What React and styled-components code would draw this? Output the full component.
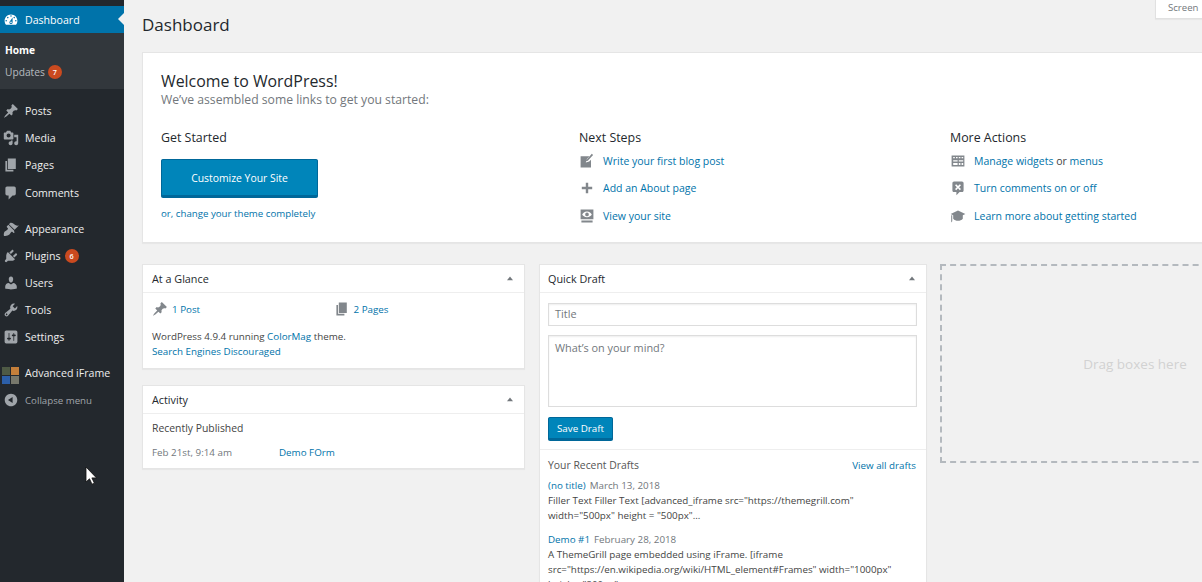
import React from "react";
import styled, { createGlobalStyle } from "styled-components";

const GlobalStyle = createGlobalStyle`
  html, body {
    margin: 0;
    height: 100%;
    overflow: hidden;
    background: #f1f1f1;
  }

  body {
    font-family: "Open Sans", "Noto Sans", sans-serif;
    font-size: 9.8px;
    color: #444;
  }

  * {
    box-sizing: border-box;
  }
`;

const ICONS = {
  dashboard:
    "M3.76 16h12.48c1.1-1.37 1.76-3.11 1.76-5 0-4.42-3.58-8-8-8s-8 3.58-8 8c0 1.89.66 3.63 1.76 5zM10 4c.55 0 1 .45 1 1s-.45 1-1 1-1-.45-1-1 .45-1 1-1zM6 6c.55 0 1 .45 1 1s-.45 1-1 1-1-.45-1-1 .45-1 1-1zm8 0c.55 0 1 .45 1 1s-.45 1-1 1-1-.45-1-1 .45-1 1-1zm-5.37 5.55L12 7v6c0 1.1-.9 2-2 2s-2-.9-2-2c0-.57.24-1.08.63-1.45zM4 10c.55 0 1 .45 1 1s-.45 1-1 1-1-.45-1-1 .45-1 1-1zm12 0c.55 0 1 .45 1 1s-.45 1-1 1-1-.45-1-1 .45-1 1-1zm-5 3c0-.55-.45-1-1-1s-1 .45-1 1 .45 1 1 1 1-.45 1-1z",
  post:
    "M10.44 3.02l1.82-1.82 6.36 6.35-1.83 1.82c-1.05-.68-2.48-.57-3.41.36l-.75.75c-.92.93-1.04 2.35-.35 3.41l-1.83 1.82-2.41-2.41-2.8 2.79c-.42.42-3.38 2.71-3.8 2.29s1.86-3.39 2.28-3.81l2.79-2.79L4.1 9.36l1.83-1.82c1.05.69 2.48.57 3.4-.36l.75-.75c.93-.92 1.05-2.35.36-3.41z",
  media:
    "M13 11V4c0-.55-.45-1-1-1h-1.67L9 1H5L3.67 3H2c-.55 0-1 .45-1 1v7c0 .55.45 1 1 1h10c.55 0 1-.45 1-1zM7 4.5c1.38 0 2.5 1.12 2.5 2.5S8.38 9.5 7 9.5 4.5 8.38 4.5 7 5.62 4.5 7 4.5zM14 6h5v10.5c0 1.38-1.12 2.5-2.5 2.5S14 17.88 14 16.5s1.12-2.5 2.5-2.5c.17 0 .34.02.5.05V9h-3V6zm-4 8.05V13h2v3.5c0 1.38-1.12 2.5-2.5 2.5S7 17.88 7 16.5 8.12 14 9.5 14c.17 0 .34.02.5.05z",
  page: "M6 15V2h10v13H6zm-1 1h8v2H3V5h2v11z",
  comment:
    "M5 2h9c1.1 0 2 .9 2 2v7c0 1.1-.9 2-2 2h-2l-5 5v-5H5c-1.1 0-2-.9-2-2V4c0-1.1.9-2 2-2z",
  appearance:
    "M14.48 11.06L7.41 3.99l1.5-1.5c.5-.56 2.3-.47 3.51.32 1.21.8 1.43 1.28 2.91 2.1 1.18.64 2.45 1.26 4.45.85zm-.71.71L6.7 4.7 4.93 6.47c-.39.39-.39 1.02 0 1.41l1.06 1.06c.39.39.39 1.03 0 1.42-.6.6-1.43 1.11-2.21 1.69-.35.26-.7.53-1.01.84C1.43 13.23.5 16.5 1.2 18.6c2.1.7 5.4-.2 6.7-1.6.31-.31.58-.66.84-1.01.58-.78 1.09-1.61 1.69-2.21.39-.39 1.03-.39 1.42 0l1.06 1.06c.39.39 1.02.39 1.41 0z",
  plugin:
    "M13.11 4.36L9.87 7.6 8 5.73l3.24-3.24c.35-.34 1.05-.2 1.56.32.52.51.66 1.21.31 1.55zm-8 1.77l.91-1.12 9.01 9.01-1.19.84c-.71.71-2.63 1.16-3.82 1.16H6.14L4.9 17.26c-.59.59-1.54.59-2.12 0-.59-.58-.59-1.53 0-2.12l1.24-1.24v-3.88c0-1.13.4-3.19 1.09-3.89zm7.26 3.97l3.24-3.24c.34-.35 1.04-.21 1.55.31.52.51.66 1.21.31 1.55l-3.24 3.25z",
  users:
    "M10 9.25c-2.27 0-2.73-3.44-2.73-3.44C7 4.02 7.82 2 9.97 2c2.16 0 2.98 2.02 2.71 3.81 0 0-.41 3.44-2.68 3.44zm0 2.57L12.72 10c2.39 0 4.52 2.33 4.52 4.53v2.49s-3.65 1.13-7.24 1.13c-3.65 0-7.24-1.13-7.24-1.13v-2.49c0-2.25 1.94-4.48 4.47-4.48z",
  tools:
    "M16.68 9.77c-1.34 1.34-3.3 1.67-4.95.99l-5.41 6.52c-.99.99-2.59.99-3.58 0s-.99-2.59 0-3.57l6.52-5.42c-.68-1.65-.35-3.61.99-4.95 1.28-1.28 3.12-1.62 4.72-1.06l-2.89 2.89 2.82 2.82 2.86-2.87c.53 1.58.18 3.39-1.08 4.65zM3.81 16.21c.4.39 1.04.39 1.43 0 .4-.4.4-1.04 0-1.43-.39-.4-1.03-.4-1.43 0-.39.39-.39 1.03 0 1.43z",
  settings:
    "M18 16V4c0-1.1-.9-2-2-2H4c-1.1 0-2 .9-2 2v12c0 1.1.9 2 2 2h12c1.1 0 2-.9 2-2zM8 11h1c.55 0 1 .45 1 1s-.45 1-1 1H8v1.5c0 .28-.22.5-.5.5s-.5-.22-.5-.5V13H6c-.55 0-1-.45-1-1s.45-1 1-1h1V5.5c0-.28.22-.5.5-.5s.5.22.5.5V11zm5-2h-1c-.55 0-1-.45-1-1s.45-1 1-1h1V5.5c0-.28.22-.5.5-.5s.5.22.5.5V7h1c.55 0 1 .45 1 1s-.45 1-1 1h-1v5.5c0 .28-.22.5-.5.5s-.5-.22-.5-.5V9z",
  collapse:
    "M10 2.16c4.33 0 7.84 3.51 7.84 7.84s-3.51 7.84-7.84 7.84S2.16 14.33 2.16 10 5.71 2.16 10 2.16zm2 11.72V6.12L6.18 9.97z",
  write:
    "M2 4h11l-3.2 3.6-1.3 4.4 4.3-1.4L15 8.5V18H2zM16 1l1.6 1.4-6.6 7.4-2 .6.6-2z",
  plus: "M8.5 3.5h3v5h5v3h-5v5h-3v-5h-5v-3h5z",
  view:
    "M2 2h16v12H2zM10 4.500C7 4.500 4.800 6.700 4 8c.8 1.300 3 3.500 6 3.500s5.200-2.200 6-3.500c-.8-1.300-3-3.500-6-3.500zm0 1.200a2.300 2.300 0 1 1 0 4.600 2.300 2.300 0 0 1 0-4.600zM3 15.500h14V18H3z",
  widgets:
    "M2 3h16v14H2zM4 5v1.500h2V5zm3.500 0v1.500h2V5zm3.500 0v1.500h2V5zm3.500 0v1.500h2V5zM4 9v1.500h5.500V9zm7 0v1.500h5.500V9zM4 12.500V15h5.500v-2.500zm7 0V15h2v-2.500zm3.500 0V15h2v-2.500z",
  commentOff:
    "M5 2h10c1.100 0 2 .9 2 2v9c0 1.100-.9 2-2 2h-3l-4 4v-4H5c-1.100 0-2-.9-2-2V4c0-1.100.9-2 2-2zM7.700 5.300L6.300 6.700 8.600 9l-2.300 2.300 1.400 1.400L10 10.400l2.300 2.300 1.400-1.400L11.400 9l2.300-2.300-1.400-1.400L10 7.600z",
  learn:
    "M10 3L.8 7.500l3.200 1.600v4.400c1.500 1.700 3.700 2.500 6 2.500s4.500-.8 6-2.500V9.100l3.200-1.600zM1.500 9h1.300v7.500L1.500 18z",
  triangle: "M10 6l5 6H5z",
};

const Svg = styled.svg`
  display: block;
  flex: none;
  width: ${(p) => p.size || 16}px;
  height: ${(p) => p.size || 16}px;
  fill: ${(p) => p.color || "#82878c"};
`;

const Icon = ({ name, size, color }) => (
  <Svg viewBox="0 0 20 20" size={size} color={color}>
    <path d={ICONS[name]} fillRule="evenodd" />
  </Svg>
);

const Page = styled.div`
  display: flex;
  width: 1202px;
  height: 582px;
  overflow: hidden;
  position: relative;
`;

/* left menu */
const Sidebar = styled.nav`
  flex: none;
  width: 124px;
  height: 100%;
  padding-top: 6px;
  background: #23282d;
  color: #eee;
  font-size: 10.6px;
`;

const MenuGroup = styled.div`
  margin-bottom: ${(p) => p.gap || 0}px;
`;

const MenuItem = styled.div`
  position: relative;
  display: flex;
  align-items: center;
  gap: 6px;
  height: ${(p) => p.height || 27.2}px;
  padding-left: 3px;
  white-space: nowrap;
  background: ${(p) => (p.active ? "#0073aa" : "transparent")};
  color: ${(p) => (p.active ? "#fff" : "#eee")};

  ${(p) =>
    p.active &&
    `
    &::after {
      content: "";
      position: absolute;
      right: 0;
      top: 7px;
      border: 6.5px solid transparent;
      border-right-color: #f1f1f1;
      border-left-width: 0;
    }
  `}
`;

const SubMenu = styled.div`
  height: 56px;
  margin-bottom: 8.4px;
  padding: 6px 0 0 5px;
  background: #32373c;
  font-size: 10.2px;
`;

const SubItem = styled.div`
  display: flex;
  align-items: center;
  gap: 3px;
  height: 22px;
  color: ${(p) => (p.current ? "#fff" : "rgba(240,245,250,.7)")};
  font-weight: ${(p) => (p.current ? 700 : 400)};
`;

const Badge = styled.span`
  display: inline-block;
  width: 14px;
  height: 14px;
  margin-left: ${(p) => p.offset || 0}px;
  border-radius: 50%;
  background: #ca4a1f;
  color: #fff;
  font-size: 7.2px;
  font-weight: 600;
  line-height: 14px;
  text-align: center;
`;

const CollapseLabel = styled.span`
  color: #a0a5aa;
  font-size: 9.7px;
`;

const PluginLogo = styled.div`
  display: grid;
  grid-template-columns: 8px 8px;
  grid-template-rows: 8px 8px;
  gap: 1px;
  margin: 5px 0 0 -1px;
  flex: none;
`;

const LogoTile = styled.span`
  background: ${(p) => p.color};
`;

/* content */
const Main = styled.main`
  flex: 1;
  min-width: 0;
  padding-left: 18px;
  overflow: hidden;
`;

const Header = styled.header`
  display: flex;
  justify-content: space-between;
  align-items: flex-start;
  height: 52px;
`;

const Title = styled.h1`
  margin: 14px 0 0;
  font-size: 17px;
  font-weight: 400;
  line-height: 22px;
  color: #23282d;
`;

const ScreenTab = styled.div`
  width: 47px;
  height: 19px;
  padding-left: 12px;
  white-space: nowrap;
  background: #fff;
  border: 1px solid #e1e1e1;
  border-top: 0;
  border-right: 0;
  box-shadow: 0 1px 1px rgba(0, 0, 0, 0.04);
  font-size: 9.6px;
  line-height: 15px;
  color: #72777c;
`;

const WelcomePanel = styled.section`
  width: 1100px;
  height: 191px;
  margin-bottom: 21px;
  padding: 17px 0 0 18px;
  background: #fff;
  border: 1px solid #e5e5e5;
  box-shadow: 0 1px 1px rgba(0, 0, 0, 0.04);
`;

const WelcomeTitle = styled.h2`
  margin: 0;
  font-size: 15.9px;
  font-weight: 400;
  line-height: 22px;
  color: #23282d;
`;

const WelcomeAbout = styled.p`
  margin: 0 0 22px;
  font-size: 12.2px;
  line-height: 15px;
  color: #72777c;
`;

const WelcomeColumns = styled.div`
  display: flex;
`;

const WelcomeColumn = styled.div`
  flex: none;
  width: ${(p) => p.width}px;
`;

const ColumnTitle = styled.h3`
  margin: 0 0 ${(p) => p.gap || 7}px;
  font-size: 12.4px;
  font-weight: 400;
  line-height: 17px;
  color: #23282d;
`;

const PrimaryButton = styled.button`
  display: block;
  width: ${(p) => p.width}px;
  height: ${(p) => p.height}px;
  margin-top: ${(p) => p.top || 0}px;
  padding: 0;
  background: #0085ba;
  border: 1px solid #006799;
  border-bottom-width: 2px;
  border-radius: 2px;
  color: #fff;
  font-family: inherit;
  font-size: ${(p) => p.fontSize}px;
  box-shadow: 0 1px 0 #006799;
`;

const Link = styled.a`
  color: #0073aa;
  text-decoration: none;
`;

const SmallNote = styled.p`
  margin: 9px 0 0;
  font-size: 9.7px;
  line-height: 15px;
`;

const StepList = styled.div`
  display: flex;
  flex-direction: column;
  gap: 11.3px;
  font-size: 10.5px;
`;

const Step = styled.div`
  display: flex;
  align-items: center;
  gap: 8px;
  height: 16px;
`;

const Columns = styled.div`
  display: flex;
  align-items: flex-start;
`;

const BoxColumn = styled.div`
  flex: none;
  display: flex;
  flex-direction: column;
  gap: 16px;
  width: ${(p) => p.width}px;
  margin-right: ${(p) => p.gap || 0}px;
`;

const Postbox = styled.section`
  background: #fff;
  border: 1px solid #e5e5e5;
  box-shadow: 0 1px 1px rgba(0, 0, 0, 0.04);
`;

const BoxHeader = styled.div`
  display: flex;
  justify-content: space-between;
  align-items: center;
  height: 28px;
  padding: 0 8px 0 ${(p) => p.inset || 9}px;
  border-bottom: 1px solid #eee;
  font-size: 10.8px;
  color: #23282d;
`;

const BoxBody = styled.div`
  padding: ${(p) => p.pad || "0 9px"};
  height: ${(p) => (p.height ? `${p.height}px` : "auto")};
`;

const GlanceRow = styled.div`
  display: flex;
  height: 36px;
  padding-top: 8px;
`;

const GlanceItem = styled.div`
  display: flex;
  align-items: center;
  gap: 4px;
  width: 183px;
  height: 16px;
`;

const Line = styled.p`
  margin: 0;
  line-height: 15px;
  white-space: nowrap;
`;

const ActivityTitle = styled.p`
  margin: 0 0 11px;
  font-size: 10.4px;
  line-height: 14px;
`;

const ActivityRow = styled.div`
  display: flex;
  line-height: 14px;
`;

const ActivityDate = styled.span`
  width: 127px;
  color: #72777c;
`;

const DraftForm = styled.div`
  display: flex;
  flex-direction: column;
  align-items: flex-start;
  gap: 9px;
  padding: 10px 8px 9px;
  border-bottom: 1px solid #eee;
`;

const Field = styled.div`
  width: 369px;
  height: ${(p) => p.height}px;
  padding: ${(p) => p.top}px 6px 0;
  background: #fff;
  border: 1px solid #ddd;
  box-shadow: inset 0 1px 2px rgba(0, 0, 0, 0.07);
  color: #72777c;
  font-size: 10.9px;
  line-height: 13px;
`;

const DraftsHead = styled.div`
  display: flex;
  justify-content: space-between;
  align-items: center;
  height: 14px;
  margin: 8px 2px 6px 0;
`;

const DraftsTitle = styled.span`
  font-size: 10.4px;
  color: #555;
`;

const Draft = styled.div`
  margin-bottom: 9px;
`;

const Muted = styled.span`
  margin-left: 4px;
  color: #72777c;
`;

const DropZone = styled.div`
  display: flex;
  align-items: center;
  justify-content: center;
  height: 199px;
  border: 2px dashed #b4b9be;
  color: #d2d2d2;
  font-size: 13.5px;
`;

const Cursor = styled.svg`
  position: absolute;
  left: 85px;
  top: 466px;
  width: 12px;
  height: 19px;
`;

const Collapse = () => <Icon name="triangle" size={12} color="#72777c" />;

export default function App() {
  return (
    <Page>
      <GlobalStyle />
      <Sidebar>
        <MenuItem active height={27}>
          <Icon name="dashboard" size={16} color="#fff" />
          Dashboard
        </MenuItem>
        <SubMenu>
          <SubItem current>Home</SubItem>
          <SubItem>
            Updates <Badge>7</Badge>
          </SubItem>
        </SubMenu>
        <MenuGroup gap={9}>
          <MenuItem><Icon name="post" color="#a0a5aa" />Posts</MenuItem>
          <MenuItem><Icon name="media" color="#a0a5aa" />Media</MenuItem>
          <MenuItem><Icon name="page" color="#a0a5aa" />Pages</MenuItem>
          <MenuItem><Icon name="comment" color="#a0a5aa" />Comments</MenuItem>
        </MenuGroup>
        <MenuGroup gap={8.6}>
          <MenuItem><Icon name="appearance" color="#a0a5aa" />Appearance</MenuItem>
          <MenuItem><Icon name="plugin" color="#a0a5aa" />Plugins <Badge offset={-2}>6</Badge></MenuItem>
          <MenuItem><Icon name="users" color="#a0a5aa" />Users</MenuItem>
          <MenuItem><Icon name="tools" color="#a0a5aa" />Tools</MenuItem>
          <MenuItem><Icon name="settings" color="#a0a5aa" />Settings</MenuItem>
        </MenuGroup>
        <MenuItem>
          <PluginLogo>
            <LogoTile color="#4e5a45" />
            <LogoTile color="#c47f3a" />
            <LogoTile color="#2c5fa8" />
            <LogoTile color="#77786c" />
          </PluginLogo>
          Advanced iFrame
        </MenuItem>
        <MenuItem>
          <Icon name="collapse" color="#a0a5aa" />
          <CollapseLabel>Collapse menu</CollapseLabel>
        </MenuItem>
      </Sidebar>

      <Main>
        <Header>
          <Title>Dashboard</Title>
          <ScreenTab>Screen</ScreenTab>
        </Header>

        <WelcomePanel>
          <WelcomeTitle>Welcome to WordPress!</WelcomeTitle>
          <WelcomeAbout>We’ve assembled some links to get you started:</WelcomeAbout>
          <WelcomeColumns>
            <WelcomeColumn width={418}>
              <ColumnTitle gap={13}>Get Started</ColumnTitle>
              <PrimaryButton width={157} height={38} fontSize={10.4}>Customize Your Site</PrimaryButton>
              <SmallNote>
                <Link>or, change your theme completely</Link>
              </SmallNote>
            </WelcomeColumn>
            <WelcomeColumn width={371}>
              <ColumnTitle>Next Steps</ColumnTitle>
              <StepList>
                <Step><Icon name="write" /><Link>Write your first blog post</Link></Step>
                <Step><Icon name="plus" /><Link>Add an About page</Link></Step>
                <Step><Icon name="view" /><Link>View your site</Link></Step>
              </StepList>
            </WelcomeColumn>
            <WelcomeColumn width={280}>
              <ColumnTitle>More Actions</ColumnTitle>
              <StepList>
                <Step><Icon name="widgets" /><span><Link>Manage widgets</Link> or <Link>menus</Link></span></Step>
                <Step><Icon name="commentOff" /><Link>Turn comments on or off</Link></Step>
                <Step><Icon name="learn" /><Link>Learn more about getting started</Link></Step>
              </StepList>
            </WelcomeColumn>
          </WelcomeColumns>
        </WelcomePanel>

        <Columns>
          <BoxColumn width={383} gap={14}>
            <Postbox>
              <BoxHeader>At a Glance <Collapse /></BoxHeader>
              <BoxBody height={75}>
                <GlanceRow>
                  <GlanceItem><Icon name="post" /><Link>1 Post</Link></GlanceItem>
                  <GlanceItem><Icon name="page" /><Link>2 Pages</Link></GlanceItem>
                </GlanceRow>
                <Line>WordPress 4.9.4 running <Link>ColorMag</Link> theme.</Line>
                <Line><Link>Search Engines Discouraged</Link></Line>
              </BoxBody>
            </Postbox>
            <Postbox>
              <BoxHeader>Activity <Collapse /></BoxHeader>
              <BoxBody pad="7px 9px 0" height={54}>
                <ActivityTitle>Recently Published</ActivityTitle>
                <ActivityRow>
                  <ActivityDate>Feb 21st, 9:14 am</ActivityDate>
                  <Link>Demo FOrm</Link>
                </ActivityRow>
              </BoxBody>
            </Postbox>
          </BoxColumn>

          <BoxColumn width={388} gap={13}>
            <Postbox>
              <BoxHeader inset={8}>Quick Draft <Collapse /></BoxHeader>
              <DraftForm>
                <Field height={23} top={3}>Title</Field>
                <Field height={72} top={5}>What’s on your mind?</Field>
                <PrimaryButton width={65} height={23} top={1} fontSize={9.8}>Save Draft</PrimaryButton>
              </DraftForm>
              <BoxBody pad="0 8px">
                <DraftsHead>
                  <DraftsTitle>Your Recent Drafts</DraftsTitle>
                  <Link>View all drafts</Link>
                </DraftsHead>
                <Draft>
                  <Line><Link>(no title)</Link><Muted>March 13, 2018</Muted></Line>
                  <Line>Filler Text Filler Text [advanced_iframe src="https://themegrill.com"</Line>
                  <Line>width="500px" height = "500px"...</Line>
                </Draft>
                <Draft>
                  <Line><Link>Demo #1</Link><Muted>February 28, 2018</Muted></Line>
                  <Line>A ThemeGrill page embedded using iFrame. [iframe</Line>
                  <Line>src="https://en.wikipedia.org/wiki/HTML_element#Frames" width="1000px"</Line>
                  <Line>height="800px"...</Line>
                </Draft>
              </BoxBody>
            </Postbox>
          </BoxColumn>

          <BoxColumn width={390}>
            <DropZone>Drag boxes here</DropZone>
          </BoxColumn>
        </Columns>
      </Main>

      <Cursor viewBox="0 0 12 19">
        <path d="M1 1v15l3.500-3.200 2.500 5.400 2.400-1-2.500-5.300H11.500z" fill="#fff" stroke="#111" strokeWidth="0.8" />
      </Cursor>
    </Page>
  );
}
